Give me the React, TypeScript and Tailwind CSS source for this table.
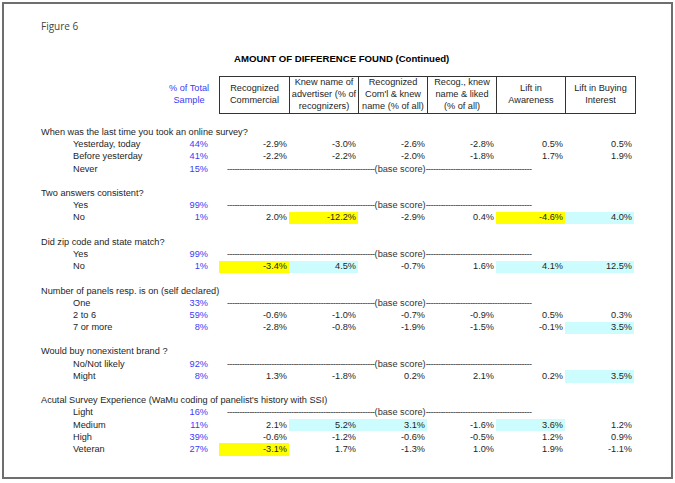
import React from "react";

type Row = { label: string; pct: string; vals?: string[]; hl?: Record<number, "y" | "c"> };
type Section = { title: string; rows: Row[] };

const sections: Section[] = [
  {
    title: "When was the last time you took an online survey?",
    rows: [
      { label: "Yesterday, today", pct: "44%", vals: ["-2.9%", "-3.0%", "-2.6%", "-2.8%", "0.5%", "0.5%"] },
      { label: "Before yesterday", pct: "41%", vals: ["-2.2%", "-2.2%", "-2.0%", "-1.8%", "1.7%", "1.9%"] },
      { label: "Never", pct: "15%" },
    ],
  },
  {
    title: "Two answers consistent?",
    rows: [
      { label: "Yes", pct: "99%" },
      { label: "No", pct: "1%", vals: ["2.0%", "-12.2%", "-2.9%", "0.4%", "-4.6%", "4.0%"], hl: { 1: "y", 4: "y", 5: "c" } },
    ],
  },
  {
    title: "Did zip code and state match?",
    rows: [
      { label: "Yes", pct: "99%" },
      { label: "No", pct: "1%", vals: ["-3.4%", "4.5%", "-0.7%", "1.6%", "4.1%", "12.5%"], hl: { 0: "y", 1: "c", 4: "c", 5: "c" } },
    ],
  },
  {
    title: "Number of panels resp. is on (self declared)",
    rows: [
      { label: "One", pct: "33%" },
      { label: "2 to 6", pct: "59%", vals: ["-0.6%", "-1.0%", "-0.7%", "-0.9%", "0.5%", "0.3%"] },
      { label: "7 or more", pct: "8%", vals: ["-2.8%", "-0.8%", "-1.9%", "-1.5%", "-0.1%", "3.5%"], hl: { 5: "c" } },
    ],
  },
  {
    title: "Would buy nonexistent brand ?",
    rows: [
      { label: "No/Not likely", pct: "92%" },
      { label: "Might", pct: "8%", vals: ["1.3%", "-1.8%", "0.2%", "2.1%", "0.2%", "3.5%"], hl: { 5: "c" } },
    ],
  },
  {
    title: "Acutal Survey Experience (WaMu coding of panelist's history with SSI)",
    rows: [
      { label: "Light", pct: "16%" },
      { label: "Medium", pct: "11%", vals: ["2.1%", "5.2%", "3.1%", "-1.6%", "3.6%", "1.2%"], hl: { 1: "c", 2: "c", 4: "c" } },
      { label: "High", pct: "39%", vals: ["-0.6%", "-1.2%", "-0.6%", "-0.5%", "1.2%", "0.9%"] },
      { label: "Veteran", pct: "27%", vals: ["-3.1%", "1.7%", "-1.3%", "1.0%", "1.9%", "-1.1%"], hl: { 0: "y" } },
    ],
  },
];

const headers = [
  ["Recognized", "Commercial"],
  ["Knew name of", "advertiser (% of", "recognizers)"],
  ["Recognized", "Com'l & knew", "name (% of all)"],
  ["Recog., knew", "name & liked", "(% of all)"],
  ["Lift in", "Awareness"],
  ["Lift in Buying", "Interest"],
];

const cols = "grid grid-cols-[70px_69px_69px_69px_69px_69px]";

function DataRow({ row }: { row: Row }) {
  return (
    <div className="flex h-[12.2px] items-center">
      <div className="w-[128px] pl-[32px] whitespace-nowrap">{row.label}</div>
      <div className="w-[39px] text-right text-[#3b3bf5]">{row.pct}</div>
      <div className="w-[11px]" />
      {row.vals ? (
        <div className={`${cols} h-full`}>
          {row.vals.map((v, i) => {
            const h = row.hl?.[i];
            return (
              <div
                key={i}
                className={`flex h-full items-center justify-end pr-[2px] ${h === "y" ? "bg-[#ffff00]" : h === "c" ? "bg-[#ccfcfd]" : ""}`}
              >
                {v}
              </div>
            );
          })}
        </div>
      ) : (
        // dashes drawn as hyphens, like the spreadsheet does
        <div className="ml-[8px] flex items-center whitespace-nowrap text-[#333]">
          <span className="tracking-[-0.6px]">{"-".repeat(60)}</span>
          <span>(base score)</span>
          <span className="tracking-[-0.6px]">{"-".repeat(43)}</span>
        </div>
      )}
    </div>
  );
}

export default function App() {
  return (
    <div className="h-[483px] w-[675px] bg-white pl-[2px] pt-[2px]">
      <div
        className="h-[477px] w-[671px] border-2 border-[#6e6e6e] text-[9.2px] leading-none text-[#1e1e1e]"
        style={{ fontFamily: '"Liberation Sans", Arial, sans-serif' }}
      >
        <div className="pl-[37px] pt-[17px] text-[10px] text-[#444]" style={{ fontFamily: '"Open Sans", sans-serif' }}>
          Figure 6
        </div>
        <div className="mt-[23px] pl-[230px] text-[9.6px] font-bold text-black">
          AMOUNT OF DIFFERENCE FOUND (Continued)
        </div>
        <div className="mt-[12px] flex pl-[37px]">
          <div className="w-[128px]" />
          <div className="flex w-[50px] flex-col items-center justify-center gap-[3px] text-center text-[#3b3bf5]">
            <span className="-ml-[10px] whitespace-nowrap">% of Total</span>
            <span className="-ml-[10px]">Sample</span>
          </div>
          <div className={`${cols} h-[38px] border border-[#333]`}>
            {headers.map((h, i) => (
              <div
                key={i}
                className={`flex flex-col items-center justify-center gap-[3px] whitespace-nowrap text-center ${i < 5 ? "border-r border-[#333]" : ""}`}
              >
                {h.map((l) => (
                  <span key={l}>{l}</span>
                ))}
              </div>
            ))}
          </div>
        </div>
        <div className="mt-[13px] pl-[37px]">
          {sections.map((s, si) => (
            <div key={si}>
              {si > 0 && <div className="h-[12.2px]" />}
              <div className="flex h-[12.2px] items-center whitespace-nowrap">{s.title}</div>
              {s.rows.map((r, ri) => (
                <DataRow key={ri} row={r} />
              ))}
            </div>
          ))}
        </div>
      </div>
    </div>
  );
}
